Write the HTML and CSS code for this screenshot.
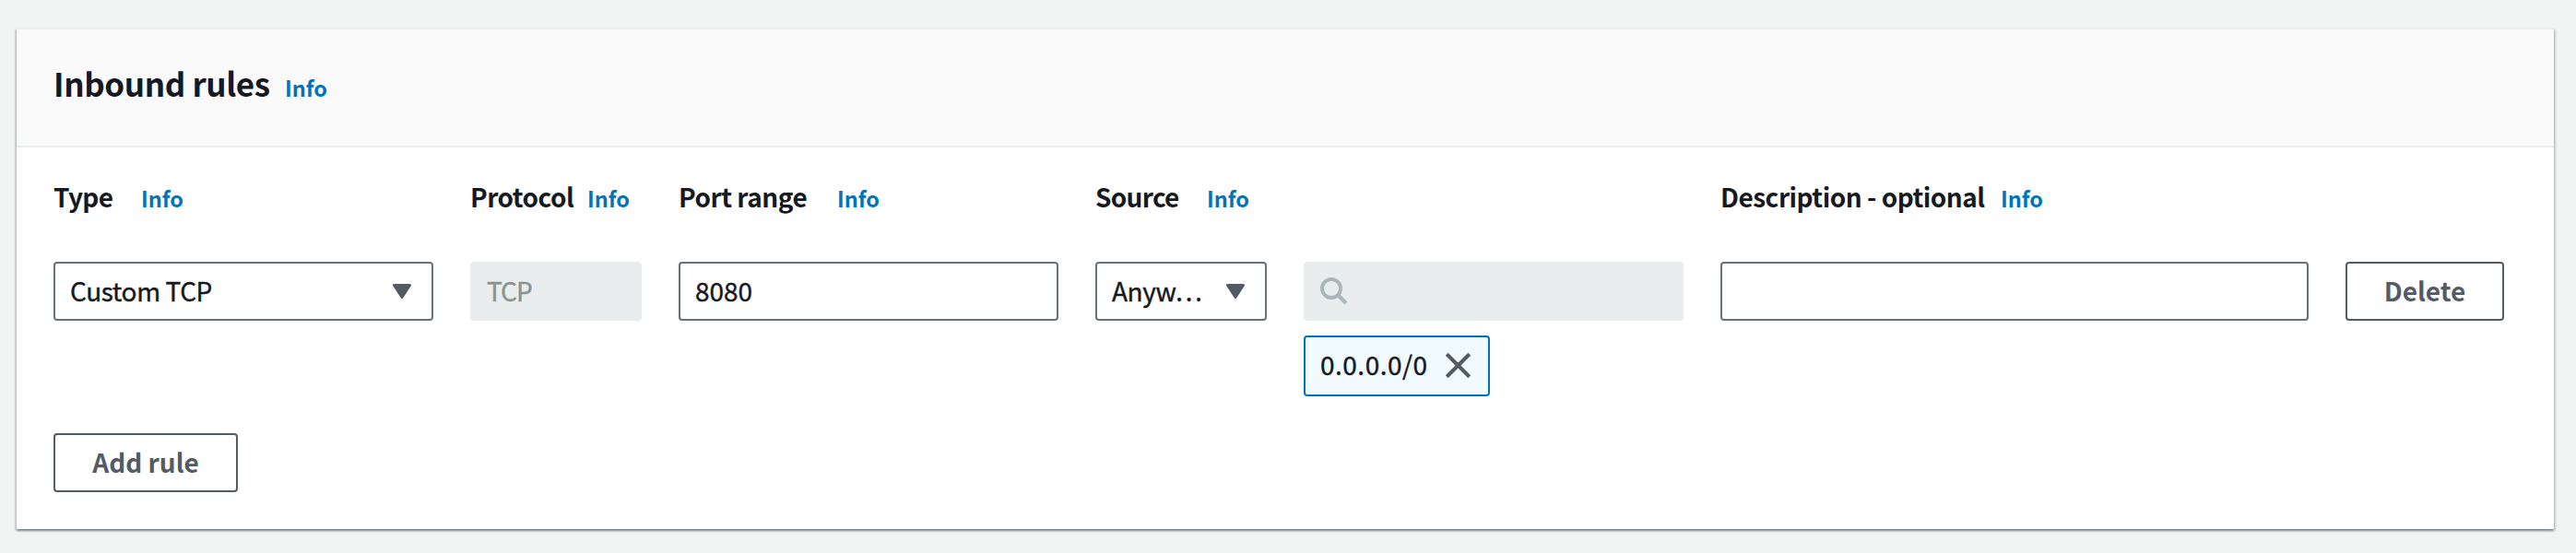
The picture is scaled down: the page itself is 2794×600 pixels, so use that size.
FILE: index.html
```
<!DOCTYPE html>
<html lang="en">
<head>
<meta charset="utf-8">
<title>Inbound rules</title>
<link rel="stylesheet" href="styles.css">
</head>
<body>
<section class="card">
  <header class="card-header">
    <h2 class="title">Inbound rules</h2>
    <a class="info">Info</a>
  </header>
  <div class="card-body">
    <div class="rules">
      <div class="label"><span class="name name-type">Type</span><a class="info">Info</a></div>
      <div class="label"><span class="name name-protocol">Protocol</span><a class="info">Info</a></div>
      <div class="label"><span class="name name-port">Port range</span><a class="info">Info</a></div>
      <div class="label label-source"><span class="name name-source">Source</span><a class="info">Info</a></div>
      <div class="label label-desc"><span class="name name-desc">Description - optional</span><a class="info">Info</a></div>

      <div class="field select"><span class="value value-type">Custom TCP</span><svg class="caret" viewBox="0 0 20 16"><path d="M1.5 1.5h17L10 14.5z"/></svg></div>
      <div class="field disabled"><span class="value value-tcp">TCP</span></div>
      <div class="field"><span class="value value-port">8080</span></div>
      <div class="field select"><span class="value value-source">Anyw…</span><svg class="caret" viewBox="0 0 20 16"><path d="M1.5 1.5h17L10 14.5z"/></svg></div>
      <div class="source">
        <div class="field disabled"><svg class="search" viewBox="0 0 30 30"><circle cx="12" cy="12" r="10"/><path d="M19 19l9 9"/></svg></div>
        <div class="tag"><span class="value value-cidr">0.0.0.0/0</span><svg class="close" viewBox="0 0 26 26"><path d="M1.2 1.2l23.6 23.6M24.8 1.2L1.2 24.8"/></svg></div>
      </div>
      <div class="field"></div>
      <button class="button button-delete">Delete</button>
    </div>
    <button class="button button-add">Add rule</button>
  </div>
</section>
</body>
</html>
```
FILE: styles.css
```
* { box-sizing: border-box; }
body {
  margin: 0;
  padding: 30px 24px 0 18px;
  height: 600px;
  background: #f2f3f3;
  color: #16191f;
  font-family: "Noto Sans CJK SC", "Noto Sans", sans-serif;
  font-size: 28px;
  line-height: 40px;
  overflow: hidden;
}
.card {
  height: 544px;
  background: #fff;
  border-top: 2px solid #eaeded;
  box-shadow: 0 2px 2px 0 rgba(0, 28, 36, .3), 2px 2px 2px 0 rgba(0, 28, 36, .15), -2px 2px 2px 0 rgba(0, 28, 36, .15);
}
.card-header {
  display: flex;
  align-items: baseline;
  height: 128px;
  padding: 36px 40px 0;
  background: #fafafa;
  border-bottom: 2px solid #eaeded;
}
.title {
  width: 251px;
  margin: 0;
  font-size: 35px;
  line-height: 44px;
  letter-spacing: -.4px;
  white-space: nowrap;
}
.info {
  color: #0073bb;
  font-size: 23.5px;
  font-weight: 700;
}
.card-body { padding: 32px 40px 0; }
.rules {
  display: grid;
  grid-template-columns: 412px 186px 412px 186px 412px 638px 172px;
  column-gap: 40px;
  row-gap: 52px;
  align-items: start;
}
.label {
  display: flex;
  align-items: baseline;
  height: 40px;
  padding-top: 1px;
  font-weight: 700;
  white-space: nowrap;
}
.label-source { grid-column: 4 / span 2; }
.label-desc { grid-column: 6 / span 2; }
.name { letter-spacing: -.5px; }
.name-type { width: 95px; letter-spacing: -.7px; }
.name-protocol { width: 127px; }
.name-port { width: 172px; }
.name-source { width: 121px; letter-spacing: -.7px; }
.name-desc { width: 304px; }
.field {
  display: flex;
  align-items: center;
  height: 64px;
  padding: 0 16px;
  border: 2px solid #687078;
  border-radius: 4px;
  background: #fff;
}
.value {
  padding-bottom: 2px;
  white-space: nowrap;
  -webkit-text-stroke: .4px currentColor;
}
.select { justify-content: space-between; padding-right: 22px; }
.select .value { padding-bottom: 3px; letter-spacing: -.4px; }
.disabled { background: #eaeded; border-color: #eaeded; color: #879596; }
.value-tcp { letter-spacing: -1px; }
.caret { width: 20px; height: 16px; fill: #545b64; stroke: #545b64; stroke-width: 3; stroke-linejoin: round; }
.search { width: 30px; height: 30px; fill: none; stroke: #aab7b8; stroke-width: 4; }
.tag {
  display: flex;
  align-items: center;
  justify-content: space-between;
  width: 202px;
  height: 66px;
  margin-top: 16px;
  padding: 0 19px 0 16px;
  border: 2px solid #0073bb;
  border-radius: 4px;
  background: #f1faff;
}
.value-cidr { padding-bottom: 4px; letter-spacing: .5px; }
.close { width: 27px; height: 27px; margin-bottom: 2px; fill: none; stroke: #545b64; stroke-width: 4; }
.button {
  height: 64px;
  padding: 0 0 3px;
  border: 2px solid #545b64;
  border-radius: 4px;
  background: #fff;
  color: #545b64;
  font: inherit;
  font-weight: 700;
}
.button-delete { width: 172px; }
.button-add { display: block; width: 200px; margin-top: 40px; }
```
